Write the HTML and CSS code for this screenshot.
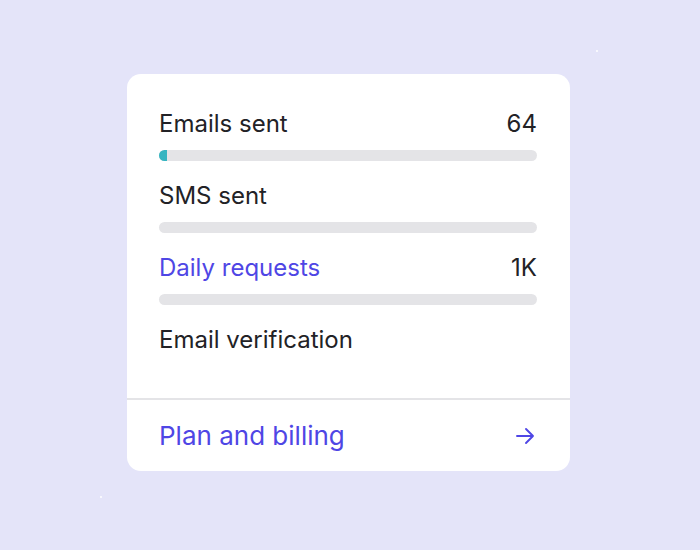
FILE: index.html
```html
<!DOCTYPE html>
<html>
<head>
<meta charset="utf-8">
<link rel="stylesheet" href="styles.css">
</head>
<body>
<span class="star star-a"></span>
<span class="star star-b"></span>
<div class="card">
  <div class="stats">
    <div class="row">
      <div class="row-head"><span class="label">Emails sent</span><span class="value">64</span></div>
      <div class="bar"><div class="fill" style="width: 2%"></div></div>
    </div>
    <div class="row">
      <div class="row-head"><span class="label">SMS sent</span></div>
      <div class="bar"></div>
    </div>
    <div class="row">
      <div class="row-head"><span class="label link">Daily requests</span><span class="value">1K</span></div>
      <div class="bar"></div>
    </div>
    <div class="row">
      <div class="row-head"><span class="label">Email verification</span></div>
    </div>
  </div>
  <div class="footer">
    <span class="link">Plan and billing</span>
    <svg class="arrow" width="20" height="18" viewBox="0 0 20 18" fill="none" stroke="currentColor" stroke-width="1.9" stroke-linecap="round" stroke-linejoin="round"><path d="M2 9h16M11 2l7 7-7 7"/></svg>
  </div>
</div>
</body>
</html>
```
FILE: styles.css
```css
html, body {
  margin: 0;
  padding: 0;
}
body {
  width: 700px;
  height: 550px;
  background: #e4e4f9;
  font-family: Inter, "Noto Sans", sans-serif;
  color: #222226;
  position: relative;
  overflow: hidden;
  padding-top: 74px;
  padding-left: 127px;
  box-sizing: border-box;
}
.star {
  position: absolute;
  width: 2px;
  height: 2px;
  background: #fff;
  border-radius: 1px;
}
.star-a { left: 596px; top: 50px; }
.star-b { left: 100px; top: 496px; }
.card {
  width: 443px;
  box-sizing: border-box;
  background: #fff;
  border-radius: 14px;
}
.stats {
  padding: 36px 33px 44px 32px;
  display: flex;
  flex-direction: column;
  gap: 21px;
}
.row {
  display: flex;
  flex-direction: column;
  gap: 12px;
}
.row-head {
  display: flex;
  justify-content: space-between;
  font-size: 24px;
  line-height: 28px;
}
.link {
  color: #4f46e5;
}
.bar {
  height: 11px;
  border-radius: 6px;
  background: #e4e4e7;
  overflow: hidden;
}
.fill {
  height: 100%;
  background: #36b5c1;
}
.footer {
  border-top: 2px solid #e4e4e7;
  padding: 22px 33px 21px 32px;
  display: flex;
  justify-content: space-between;
  align-items: center;
  font-size: 26px;
  line-height: 28px;
}
.arrow {
  color: #4f46e5;
  margin-right: 2px;
}
```
